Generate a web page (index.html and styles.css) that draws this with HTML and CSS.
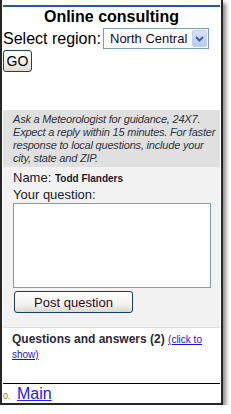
FILE: index.html
```html
<!DOCTYPE html>
<html>
<head>
<meta charset="utf-8">
<link rel="stylesheet" href="styles.css">
</head>
<body>
<div class="window">
  <div class="rule"></div>
  <h1 class="title">Online consulting</h1>
  <div class="region-row">
    <span class="label">Select region:</span>
    <div class="select">
      <span class="select-text">North Central</span>
      <span class="select-btn">
        <svg width="9" height="6" viewBox="0 0 9 6"><path d="M1 1 L4.5 4.5 L8 1" fill="none" stroke="#4d6185" stroke-width="2"/></svg>
      </span>
    </div>
  </div>
  <button class="go">GO</button>
  <div class="info">Ask a Meteorologist for guidance, 24X7.<br>Expect a reply within 15 minutes. For faster<br>response to local questions, include your<br>city, state and ZIP.</div>
  <div class="form">
    <div class="line">Name: <b class="who">Todd Flanders</b></div>
    <div class="line">Your question:</div>
    <div class="textarea"></div>
    <button class="post">Post question</button>
  </div>
  <div class="qa">
    <span class="qa-title">Questions and answers (2)</span> <a class="qa-link" href="#">(click to show)</a>
  </div>
  <div class="footer">
    <span class="num">0.</span><a class="main" href="#">Main</a>
  </div>
</div>
</body>
</html>
```
FILE: styles.css
```css
html, body {
  margin: 0;
  padding: 0;
  background: #fff;
}
body {
  font-family: "Liberation Sans", Arial, sans-serif;
}
.window {
  box-sizing: border-box;
  width: 223px;
  height: 405px;
  border: 2px solid #262626;
  border-top: 0;
  padding: 0 1px;
  background: #fff;
  box-shadow: 3px 3px 4px rgba(0, 0, 0, 0.45);
  display: flex;
  flex-direction: column;
}
.rule {
  margin-top: 5px;
  height: 2px;
  background: #1d5c9d;
}
.title {
  margin: 1px 0 0;
  font-size: 16px;
  line-height: 18px;
  font-weight: bold;
  text-align: center;
  color: #000;
}
.region-row {
  margin-top: 2px;
  display: flex;
  align-items: center;
  height: 21px;
}
.label {
  font-size: 16px;
  line-height: 18px;
  color: #000;
  width: 100px;
}
.select {
  box-sizing: border-box;
  width: 106px;
  height: 21px;
  border: 1px solid #7f9db9;
  background: #fff;
  display: flex;
  align-items: center;
  padding: 1px;
}
.select-text {
  flex: 1;
  font-size: 13px;
  padding-left: 5px;
  color: #200828;
}
.select-btn {
  box-sizing: border-box;
  width: 15px;
  height: 17px;
  border: 1px solid #bfd0f0;
  border-radius: 2px;
  background: linear-gradient(#d7e3fb, #b7cbf3);
  display: flex;
  align-items: center;
  justify-content: center;
}
.go {
  margin-top: 1px;
  width: 29px;
  height: 22px;
  padding: 0;
  font-family: "Liberation Sans", Arial, sans-serif;
  font-size: 14px;
  color: #000;
  border: 1px solid #1c3c6c;
  border-radius: 3px;
  background: linear-gradient(#ffffff, #f2f1ea 60%, #dedbcd);
}
.info {
  margin-top: 38px;
  height: 57px;
  box-sizing: border-box;
  padding: 3px 0 0 10px;
  background: #e0e0e0;
  font-size: 11px;
  line-height: 13px;
  letter-spacing: -0.2px;
  font-style: italic;
  color: #2e3340;
  white-space: nowrap;
  overflow: hidden;
}
.form {
  background: #f2f2f2;
  height: 161px;
  box-sizing: border-box;
  padding: 3px 0 0 10px;
  border-bottom: 1px solid #dcdcdc;
  color: #1a1a2a;
}
.line {
  font-size: 13px;
  line-height: 16px;
}
.who {
  font-size: 10px;
}
.textarea {
  box-sizing: border-box;
  width: 198px;
  height: 85px;
  border: 1px solid #7f9db9;
  background: #fff;
}
.post {
  display: block;
  margin: 3px 0 0 1px;
  width: 119px;
  height: 22px;
  padding: 0;
  font-family: "Liberation Sans", Arial, sans-serif;
  font-size: 13px;
  color: #2a0a2a;
  border: 1px solid #1c3c6c;
  border-radius: 3px;
  background: linear-gradient(#ffffff, #f4f3ee 60%, #dcd9cc);
}
.qa {
  height: 55px;
  box-sizing: border-box;
  padding: 4px 8px 0 9px;
  font-size: 12px;
  line-height: 14px;
  color: #2a2a3a;
}
.qa-title {
  font-weight: bold;
}
.qa-link {
  font-size: 10px;
  color: #1515e0;
}
.footer {
  border-top: 1px solid #000;
  display: flex;
  align-items: baseline;
  padding-top: 1px;
}
.num {
  font-size: 9px;
  color: #a07818;
  width: 14px;
}
.main {
  font-size: 16px;
  line-height: 18px;
  color: #2020f0;
}
```
